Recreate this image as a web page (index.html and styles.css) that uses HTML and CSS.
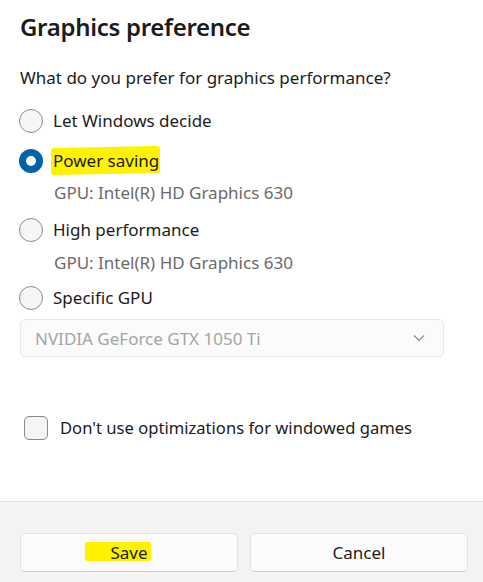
FILE: index.html
```html
<!DOCTYPE html>
<html>
<head>
<meta charset="utf-8">
<link rel="stylesheet" href="styles.css">
</head>
<body>
<div class="dialog">
  <div class="content">
    <h1 class="title">Graphics preference</h1>
    <p class="question">What do you prefer for graphics performance?</p>
    <div class="options">
      <div class="option opt-first">
        <span class="radio"></span>
        <span class="label">Let Windows decide</span>
      </div>
      <div class="option opt-second">
        <span class="radio checked"></span>
        <span class="label"><span class="mark mark-ps"></span><span class="label-text">Power saving</span></span>
      </div>
      <div class="sub sub-first">GPU: Intel(R) HD Graphics 630</div>
      <div class="option opt-third">
        <span class="radio"></span>
        <span class="label">High performance</span>
      </div>
      <div class="sub sub-second">GPU: Intel(R) HD Graphics 630</div>
      <div class="option opt-fourth">
        <span class="radio"></span>
        <span class="label">Specific GPU</span>
      </div>
    </div>
    <div class="select">
      <span class="select-text">NVIDIA GeForce GTX 1050 Ti</span>
      <svg class="chevron" width="12" height="8" viewBox="0 0 12 8"><path d="M1 1.5 L6 6.5 L11 1.5" fill="none" stroke="#8a8a8a" stroke-width="1.2"/></svg>
    </div>
    <div class="check-row">
      <span class="checkbox"></span>
      <span class="label check-label">Don't use optimizations for windowed games</span>
    </div>
  </div>
  <div class="footer">
    <button class="btn"><span class="btn-label"><span class="mark mark-save"></span><span class="label-text">Save</span></span></button>
    <button class="btn">Cancel</button>
  </div>
</div>
</body>
</html>
```
FILE: styles.css
```css
html, body {
  margin: 0;
  padding: 0;
  background: #ffffff;
}
body {
  font-family: "Noto Sans", "Open Sans", sans-serif;
  color: #1b1b1b;
  width: 483px;
  height: 582px;
  overflow: hidden;
}
.dialog {
  display: flex;
  flex-direction: column;
  height: 582px;
}
.content {
  flex: 1;
  padding: 0 20px;
}
.title {
  margin: 0;
  padding-top: 9px;
  font-size: 24px;
  font-weight: 600;
  line-height: 36px;
  letter-spacing: -0.3px;
}
.question {
  margin: 21px 0 0 0;
  font-size: 17px;
  line-height: 24px;
}
.options {
  display: flex;
  flex-direction: column;
}
.option {
  display: flex;
  align-items: center;
  height: 24px;
  gap: 10px;
}
.opt-first { margin-top: 19px; }
.opt-second { margin-top: 16px; }
.opt-third { margin-top: 13px; }
.opt-fourth { margin-top: 11px; }
.radio {
  width: 24px;
  height: 24px;
  border-radius: 50%;
  border: 1px solid #8b8b8b;
  background: #f6f6f6;
  box-sizing: border-box;
  flex: none;
  margin-left: -1px;
}
.radio.checked {
  border: 7px solid #0063a8;
  background: #ffffff;
}
.label {
  font-size: 17px;
  line-height: 24px;
  position: relative;
  display: inline-block;
  white-space: nowrap;
}
.check-label {
  font-size: 16.6px;
}
.label-text {
  position: relative;
}
.mark {
  position: absolute;
  background: #fff200;
  border-radius: 3px;
}
.mark-ps {
  left: -2px;
  right: -1px;
  top: -2px;
  bottom: -1px;
  transform: skewY(-1deg);
}
.sub {
  padding-left: 34px;
  font-size: 17px;
  line-height: 24px;
  color: #6b6b6b;
}
.sub-first { margin-top: 8px; }
.sub-second { margin-top: 9px; }
.select {
  margin-top: 9px;
  width: 424px;
  height: 38px;
  box-sizing: border-box;
  border: 1px solid #e8e8e8;
  border-radius: 5px;
  background: #fbfbfb;
  display: flex;
  align-items: center;
  justify-content: space-between;
  padding: 0 18px 0 14px;
}
.select-text {
  font-size: 17px;
  color: #a4a4a4;
}
.chevron {
  display: block;
}
.check-row {
  margin-top: 59px;
  margin-left: 4px;
  display: flex;
  align-items: center;
  gap: 12px;
}
.checkbox {
  width: 24px;
  height: 24px;
  box-sizing: border-box;
  border: 1px solid #8b8b8b;
  border-radius: 5px;
  background: #f6f6f6;
  flex: none;
}
.footer {
  height: 81px;
  box-sizing: border-box;
  border-top: 1px solid #e2e2e2;
  background: #f3f3f3;
  display: flex;
  gap: 12px;
  padding: 31px 15px 10px 20px;
}
.btn {
  flex: 1;
  height: 39px;
  border: 1px solid #e3e3e3;
  border-bottom-color: #cccccc;
  border-radius: 5px;
  background: #fbfbfb;
  font-family: "Noto Sans", "Open Sans", sans-serif;
  font-size: 17px;
  color: #1b1b1b;
  padding: 0;
}
.btn-label {
  position: relative;
  display: inline-block;
}
.mark-save {
  left: -25px;
  right: -3px;
  top: 1px;
  bottom: 3px;
  border-radius: 2px;
}
```
